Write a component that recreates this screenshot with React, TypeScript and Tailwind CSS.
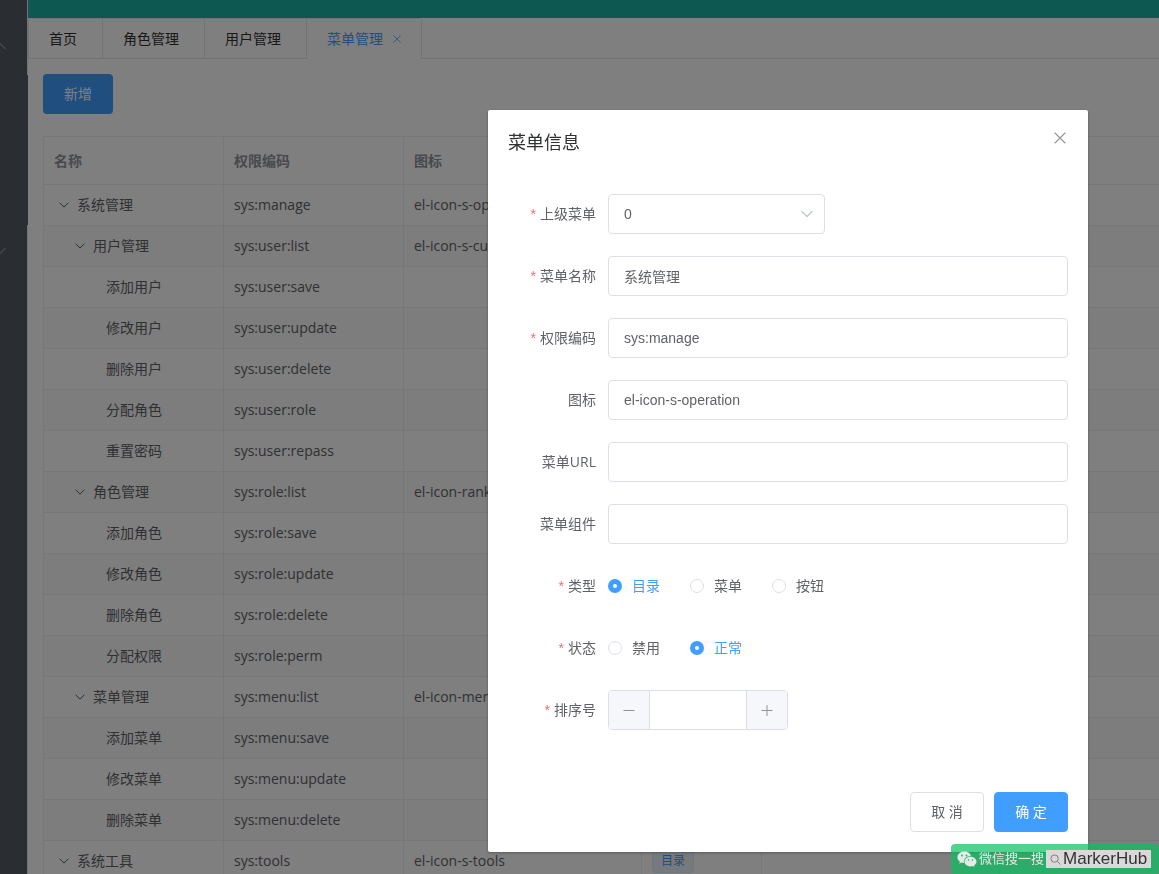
import React from 'react';

const uiFont = "font-['Open_Sans','Noto_Sans_CJK_SC',sans-serif]";
const inputFont = "font-['Liberation_Sans','Noto_Sans_CJK_SC',sans-serif]";

type Row = { name: string; code: string; icon?: string; level: 0 | 1 | 2; tag?: string };

const rows: Row[] = [
  { name: '系统管理', code: 'sys:manage', icon: 'el-icon-s-operation', level: 0, tag: '目录' },
  { name: '用户管理', code: 'sys:user:list', icon: 'el-icon-s-custom', level: 1, tag: '菜单' },
  { name: '添加用户', code: 'sys:user:save', level: 2, tag: '按钮' },
  { name: '修改用户', code: 'sys:user:update', level: 2, tag: '按钮' },
  { name: '删除用户', code: 'sys:user:delete', level: 2, tag: '按钮' },
  { name: '分配角色', code: 'sys:user:role', level: 2, tag: '按钮' },
  { name: '重置密码', code: 'sys:user:repass', level: 2, tag: '按钮' },
  { name: '角色管理', code: 'sys:role:list', icon: 'el-icon-rank', level: 1, tag: '菜单' },
  { name: '添加角色', code: 'sys:role:save', level: 2, tag: '按钮' },
  { name: '修改角色', code: 'sys:role:update', level: 2, tag: '按钮' },
  { name: '删除角色', code: 'sys:role:delete', level: 2, tag: '按钮' },
  { name: '分配权限', code: 'sys:role:perm', level: 2, tag: '按钮' },
  { name: '菜单管理', code: 'sys:menu:list', icon: 'el-icon-menu', level: 1, tag: '菜单' },
  { name: '添加菜单', code: 'sys:menu:save', level: 2, tag: '按钮' },
  { name: '修改菜单', code: 'sys:menu:update', level: 2, tag: '按钮' },
  { name: '删除菜单', code: 'sys:menu:delete', level: 2, tag: '按钮' },
  { name: '系统工具', code: 'sys:tools', icon: 'el-icon-s-tools', level: 0, tag: '目录' },
];

const indent = { 0: 'pl-[15px]', 1: 'pl-[31px]', 2: 'pl-[62px]' };

function Chevron({ className, up }: { className: string; up?: boolean }) {
  return (
    <svg viewBox="0 0 12 12" className={className} fill="none" stroke="currentColor" strokeWidth="1.2" strokeLinecap="round" strokeLinejoin="round" aria-hidden="true">
      <path d={up ? 'M1 8.5 6 3.5l5 5' : 'M1 3.5l5 5 5-5'} />
    </svg>
  );
}

function Cross({ className }: { className: string }) {
  return (
    <svg viewBox="0 0 12 12" className={className} fill="none" stroke="currentColor" strokeWidth="1.1" strokeLinecap="round" aria-hidden="true">
      <path d="M1 1l10 10M11 1L1 11" />
    </svg>
  );
}

function Sidebar() {
  return (
    <aside className="flex w-7 shrink-0 flex-col bg-[#545c64] text-[#909399]">
      <div className="h-[75px] border-r border-[#e6e6e6] pt-10">
        <Chevron up className="-ml-1.5 size-3" />
      </div>
      <div className="h-[150px]" />
      <div className="flex-1 border-r border-[#e6e6e6] pt-5">
        <Chevron className="-ml-1.5 size-3" />
      </div>
    </aside>
  );
}

function Tabs() {
  return (
    <nav className="flex h-[41px] border-b border-[#e4e7ed] text-sm text-[#303133]">
      <div className="flex h-[41px] rounded-t border border-b-0 border-[#e4e7ed]">
        {['首页', '角色管理', '用户管理'].map((t) => (
          <a key={t} href="#" className="flex items-center border-r border-b border-[#e4e7ed] pr-[25px] pl-5">
            {t}
          </a>
        ))}
        <a href="#" className="flex items-center gap-2.5 bg-white px-5 text-[#409eff]">
          菜单管理
          <Cross className="size-2" />
        </a>
      </div>
    </nav>
  );
}

function MenuTable() {
  const cell = 'border-r border-b border-[#ebeef5] px-2.5 last:border-r-0';
  return (
    <table className="w-full table-fixed border-separate border-spacing-0 border-t border-l border-[#ebeef5] text-sm text-[#606266]">
      <colgroup>
        <col className="w-[180px]" />
        <col className="w-[180px]" />
        <col className="w-[238px]" />
        <col className="w-[120px]" />
        <col className="w-[238px]" />
        <col />
      </colgroup>
      <thead>
        <tr className="h-12 text-left text-[#909399]">
          <th className={cell}>名称</th>
          <th className={cell}>权限编码</th>
          <th className={cell}>图标</th>
          <th className={cell}></th>
          <th className={cell}></th>
          <th className={cell}></th>
        </tr>
      </thead>
      <tbody>
        {rows.map((r) => (
          <tr key={r.code} className="h-[41px] even:bg-[#fafafa]">
            <td className="border-r border-b border-[#ebeef5]">
              <div className={`flex items-center gap-2 ${indent[r.level]}`}>
                {r.level < 2 && <Chevron className="size-2.5" />}
                {r.name}
              </div>
            </td>
            <td className={cell}>{r.code}</td>
            <td className={cell}>{r.icon}</td>
            <td className={cell}>
              <span className="inline-block h-6 rounded border border-[#d9ecff] bg-[#ecf5ff] px-2 text-xs leading-[22px] text-[#409eff]">{r.tag}</span>
            </td>
            <td className={cell}></td>
            <td className={cell}></td>
          </tr>
        ))}
      </tbody>
    </table>
  );
}

function Field({ label, id, required, children }: { label: string; id?: string; required?: boolean; children: React.ReactNode }) {
  return (
    <div className="flex min-h-10 items-center">
      <label htmlFor={id} className="w-[100px] shrink-0 pr-3 text-right">
        {required && <span className={`mr-1 text-[#f56c6c] ${inputFont}`}>*</span>}
        {label}
      </label>
      <div className="flex min-w-0 flex-1 items-center">{children}</div>
    </div>
  );
}

function TextField({ label, id, required, value = '' }: { label: string; id: string; required?: boolean; value?: string }) {
  return (
    <Field label={label} id={id} required={required}>
      <input id={id} defaultValue={value} className={`h-10 w-full rounded border border-[#dcdfe6] bg-white px-[15px] outline-none ${inputFont}`} />
    </Field>
  );
}

function Radios({ name, options, selected }: { name: string; options: string[]; selected: string }) {
  return (
    <div className="flex gap-[30px]" role="radiogroup" aria-label={name}>
      {options.map((o) => (
        <label key={o} className="flex items-center gap-2.5 has-checked:text-[#409eff]">
          <input
            type="radio"
            name={name}
            defaultChecked={o === selected}
            className="size-3.5 appearance-none rounded-full border border-[#dcdfe6] bg-white checked:border-[5px] checked:border-[#409eff]"
          />
          {o}
        </label>
      ))}
    </div>
  );
}

function Dialog() {
  const stepper = 'flex w-[41px] items-center justify-center border-[#dcdfe6] bg-[#f5f7fa] text-[#909399]';
  return (
    <section role="dialog" aria-label="菜单信息" className="w-[600px] rounded-xs bg-white text-sm text-[#606266] shadow-[0_1px_3px_rgba(0,0,0,0.3)]">
      <header className="flex items-start justify-between px-5 pt-5">
        <h2 className="text-lg leading-6 text-[#303133]">菜单信息</h2>
        <button type="button" aria-label="关闭" className="p-0.5 text-[#909399]">
          <Cross className="size-3" />
        </button>
      </header>
      <form className="flex flex-col gap-[22px] px-5 pt-10 pb-[62px]">
        <Field label="上级菜单" id="parent" required>
          <div className="relative w-[217px]">
            <select id="parent" className={`h-10 w-full appearance-none rounded border border-[#dcdfe6] bg-white px-[15px] outline-none ${inputFont}`}>
              <option>0</option>
            </select>
            <Chevron className="pointer-events-none absolute top-3.5 right-3 size-3 text-[#c0c4cc]" />
          </div>
        </Field>
        <TextField label="菜单名称" id="name" required value="系统管理" />
        <TextField label="权限编码" id="code" required value="sys:manage" />
        <TextField label="图标" id="icon" value="el-icon-s-operation" />
        <TextField label="菜单URL" id="url" />
        <TextField label="菜单组件" id="component" />
        <Field label="类型" required>
          <Radios name="类型" options={['目录', '菜单', '按钮']} selected="目录" />
        </Field>
        <Field label="状态" required>
          <Radios name="状态" options={['禁用', '正常']} selected="正常" />
        </Field>
        <Field label="排序号" id="order" required>
          <div className="flex h-10 w-[180px] overflow-hidden rounded border border-[#dcdfe6]">
            <button type="button" aria-label="减少" className={`border-r ${stepper}`}>
              <svg viewBox="0 0 12 12" className="size-3" stroke="currentColor" aria-hidden="true"><path d="M0.5 6.5h11" /></svg>
            </button>
            <input id="order" className={`min-w-0 flex-1 text-center outline-none ${inputFont}`} />
            <button type="button" aria-label="增加" className={`border-l ${stepper}`}>
              <svg viewBox="0 0 12 12" className="size-3" stroke="currentColor" aria-hidden="true"><path d="M0.5 6.5h11M6 1v11" /></svg>
            </button>
          </div>
        </Field>
      </form>
      <footer className="flex justify-end gap-2.5 px-5 pb-5">
        <button type="button" className="h-10 min-w-[74px] rounded border border-[#dcdfe6] px-5">取 消</button>
        <button type="button" className="h-10 min-w-[74px] rounded border border-[#409eff] bg-[#409eff] px-5 text-white">确 定</button>
      </footer>
    </section>
  );
}

function Watermark() {
  return (
    <div className="fixed right-0 bottom-0 flex h-[30px] w-52 items-center gap-0.5 rounded bg-[#07c160]/70 pl-1.5 text-[#e6e6e6]">
      <svg viewBox="0 0 20 16" className="h-4 w-5" aria-hidden="true">
        <path fill="#e3ece7" d="M7.3.5C3.400.5.4 3.100.4 6.300c0 1.800 1 3.400 2.500 4.400l-.7 2 2.300-1.200c.8.2 1.700.4 2.600.4-.9-4 2.400-6.900 6.900-6.800C13.500 2.400 10.700.5 7.300.5z" />
        <path fill="#e3ece7" d="M13.500 5.700c-3.400 0-6 2.200-6 4.900s2.600 4.800 6 4.800c.8 0 1.500-.1 2.200-.3l1.900 1-.5-1.700c1.500-.9 2.400-2.200 2.400-3.800 0-2.700-2.600-4.900-6-4.900z" />
        <g fill="#2fae6a"><circle cx="5" cy="4.500" r=".9" /><circle cx="9.500" cy="4.500" r=".9" /><circle cx="11.500" cy="9" r=".8" /><circle cx="15.500" cy="9" r=".8" /></g>
      </svg>
      <span className="text-[13px]">微信搜一搜</span>
      <span className="flex h-[18px] items-center gap-0.5 bg-[#d9d9d9] px-1 font-['Liberation_Sans',sans-serif] text-[17px] text-[#333]">
        <svg viewBox="0 0 12 12" className="size-[11px]" fill="none" stroke="#777" aria-hidden="true"><circle cx="5" cy="5" r="4" /><path d="M8 8l3.500 3.500" /></svg>
        MarkerHub
      </span>
    </div>
  );
}

export default function App() {
  return (
    <div className={`flex h-screen overflow-hidden bg-white ${uiFont}`}>
      <Sidebar />
      <div className="min-w-0 flex-1">
        <div className="h-[18px] bg-[#1ab3a2]" />
        <Tabs />
        <main className="pt-[15px] pl-[15px]">
          <button type="button" className="mb-[22px] h-10 rounded bg-[#409eff] px-[21px] text-sm text-white">新增</button>
          <MenuTable />
        </main>
      </div>
      <div className="fixed inset-0 flex items-start justify-end bg-black/50 pt-[110px] pr-[71px]">
        <Dialog />
      </div>
      <Watermark />
    </div>
  );
}
